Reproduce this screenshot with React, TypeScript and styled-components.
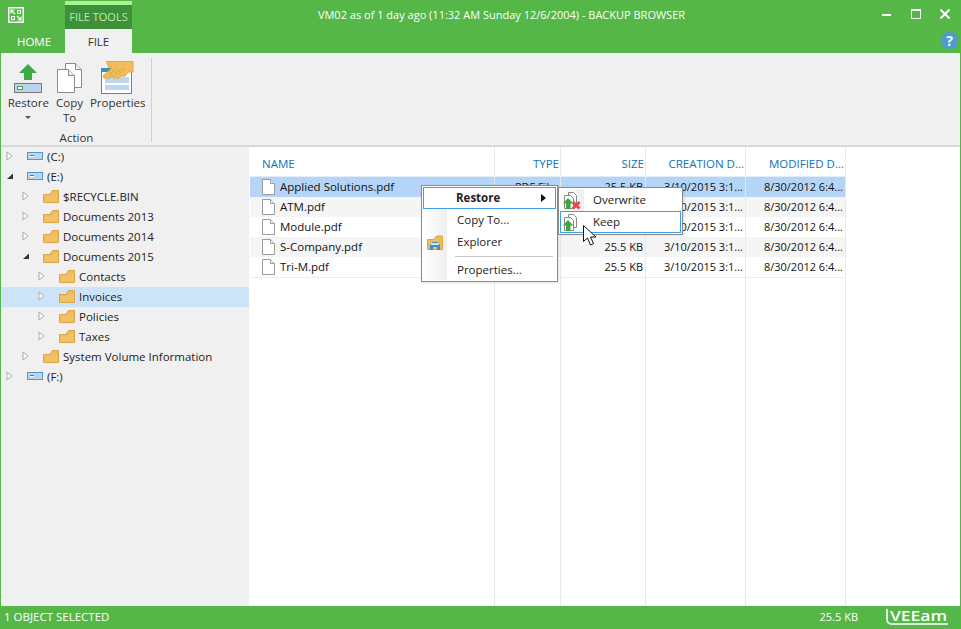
import React from "react";
import styled, { createGlobalStyle } from "styled-components";

const Global = createGlobalStyle`
  html, body { margin: 0; padding: 0; width: 961px; height: 629px; overflow: hidden; }
  body { font-family: "Open Sans", "Noto Sans", "Liberation Sans", sans-serif; font-size: 11.5px; color: #111; }
  * { box-sizing: border-box; }
`;

const GREEN = "#54b748";

const Win = styled.div`
  width: 961px; height: 629px; display: flex; flex-direction: column;
  background: ${GREEN}; padding: 0 1px; position: relative;
`;
const TitleBar = styled.div`
  height: 29px; display: flex; align-items: flex-start; position: relative;
`;
const AppLogo = styled.div`
  width: 16px; height: 16px; margin: 7px 0 0 7px; flex: none;
`;
const Context = styled.div`
  margin: 1px 0 0 41px; width: 67px; height: 28px; background: #3f903a;
  border-top: 4px solid #a8f293; color: #b5efa5; text-align: center; line-height: 24px; flex: none; font-size: 11px;
`;
const Title = styled.div`
  position: absolute; left: 42px; right: 0; top: 6px; text-align: center; color: #fff; line-height: 17px; font-size: 11px;
`;
const WinButtons = styled.div`
  margin-left: auto; display: flex; gap: 19px; padding: 9px 10px 0 0; position: relative;
`;
const TabBar = styled.div`
  height: 24px; display: flex; align-items: stretch; position: relative;
`;
const Tab = styled.div<{ $active?: boolean }>`
  width: ${p => (p.$active ? 67 : 64)}px; text-align: center; line-height: 25px;
  padding-left: ${p => (p.$active ? 0 : 2)}px;
  background: ${p => (p.$active ? "#f0f0f0" : "transparent")};
  color: ${p => (p.$active ? "#333" : "#fff")};
`;
const Help = styled.div`
  position: absolute; right: 2px; top: 3px; width: 17px; height: 17px; border-radius: 50%;
  background: #4c9cd2; color: #fff; font-weight: 700; font-size: 14px; line-height: 17px; text-align: center;
`;
const Ribbon = styled.div`
  height: 94px; background: #f0f0f0; border-bottom: 2px solid #d8d8d8; display: flex; padding-top: 5px;
`;
const Group = styled.div`
  width: 151px; height: 84px; padding-left: 1px; border-right: 1px solid #d0d0d0; display: flex; flex-direction: column;
`;
const GroupItems = styled.div`
  display: flex; height: 73px; flex: none;
`;
const RibbonBtn = styled.div<{ $w: number }>`
  width: ${p => p.$w}px; display: flex; flex-direction: column; align-items: center; text-align: center;
  line-height: 15px; color: #333; padding-top: 3px;
`;
const BtnIcon = styled.div`
  height: 33px; margin-bottom: 1px; display: flex; align-items: flex-end; justify-content: center;
`;
const Caret = styled.div`
  width: 0; height: 0; margin-top: 6px;
  border-left: 3px solid transparent; border-right: 3px solid transparent; border-top: 3px solid #555;
`;
const GroupLabel = styled.div`
  text-align: center; line-height: 14px; color: #333; flex: none;
`;
const Body = styled.div`
  flex: 1; display: flex; min-height: 0; background: #fff;
`;
const Tree = styled.div`
  width: 248px; background: #f0f0f0; flex: none;
`;
const TreeRow = styled.div<{ $level: number; $selected?: boolean }>`
  height: 20px; display: flex; align-items: center; color: #222;
  padding-left: ${p => 5 + p.$level * 16}px; padding-bottom: 2px;
  background: ${p => (p.$selected ? "#cde4f8" : "transparent")};
`;
const Arrow = styled.div`
  width: 11px; display: flex; flex: none;
`;
const TreeIcon = styled.div`
  margin-left: 10px; margin-right: 4px; display: flex; flex: none;
`;
const Pane = styled.div`
  flex: 1; margin-left: 1px; background-color: #fff; display: flex; flex-direction: column;
  background-image:
    linear-gradient(#e9e9e9, #e9e9e9), linear-gradient(#e9e9e9, #e9e9e9), linear-gradient(#e9e9e9, #e9e9e9),
    linear-gradient(#e9e9e9, #e9e9e9), linear-gradient(#e9e9e9, #e9e9e9);
  background-repeat: no-repeat;
  background-size: 1px 100%;
  background-position: 244px 0, 310px 0, 395px 0, 495px 0, 595px 0;
`;
const Cols = "245px 66px 85px 100px 100px";
const Head = styled.div`
  height: 30px; display: grid; grid-template-columns: ${Cols}; width: 596px; flex: none;
  border-bottom: 1px solid #e4eef8; padding-top: 2px;
`;
const HeadCell = styled.div<{ $left?: boolean }>`
  color: #0b72b9; line-height: 29px; white-space: nowrap; overflow: hidden;
  text-align: ${p => (p.$left ? "left" : "right")};
  padding: ${p => (p.$left ? "0 0 0 12px" : "0 2px 0 0")};
`;
const Row = styled.div<{ $bg: string }>`
  height: 20px; display: grid; grid-template-columns: ${Cols}; width: 596px; background: ${p => p.$bg};
`;
const Cell = styled.div`
  text-align: right; padding-right: 2px; line-height: 20px; white-space: nowrap; overflow: hidden; color: #111;
  border-right: 1px solid #e9e9e9; font-size: 11px;
`;
const NameCell = styled(Cell)`
  display: flex; align-items: center; gap: 5px; padding-left: 12px; padding-bottom: 1px; text-align: left; font-size: 11.5px;
`;
const ListEnd = styled.div`
  width: 596px; height: 1px; background: #e6eff8;
`;
const Status = styled.div`
  height: 23px; display: flex; align-items: center; color: #fff; padding: 0 3px 2px; flex: none;
`;
const StatusSize = styled.div`
  margin-left: auto; margin-right: 28px; font-size: 11px;
`;
const VeeamWrap = styled.div`
  margin-right: 9px; display: flex; margin-top: 2px;
`;
const Menu = styled.div`
  position: absolute; background: #fff; border: 1px solid #8a8a8a; padding: 1px;
  box-shadow: 1px 1px 2px rgba(0,0,0,.12);
  &::before {
    content: ""; position: absolute; left: 1px; top: 1px; bottom: 1px; width: 24px;
    background: linear-gradient(90deg, #fff, #efefef);
  }
`;
const MainMenu = styled(Menu)`
  left: 421px; top: 185px; width: 137px; height: 97px;
`;
const SubMenu = styled(Menu)`
  left: 558px; top: 187px; width: 125px; height: 48px;
`;
const MenuItem = styled.div<{ $hot?: boolean; $bold?: boolean }>`
  position: relative; height: 22px; line-height: 20px; display: flex; align-items: center;
  padding-left: ${p => (p.$bold ? 32 : 33)}px; border: 1px solid ${p => (p.$hot ? "#3d9fe8" : "transparent")};
  font-weight: ${p => (p.$bold ? 700 : 400)}; color: #222; background: ${p => (p.$hot ? "#fff" : "transparent")};
`;
const SubArrow = styled.div`
  position: absolute; right: 9px; top: 6px; width: 0; height: 0;
  border-top: 4px solid transparent; border-bottom: 4px solid transparent; border-left: 5px solid #111;
`;
const MenuIcon = styled.div`
  position: absolute; left: 1px; top: 1px; display: flex;
`;
const MenuSep = styled.div`
  height: 1px; background: #c8c8c8; margin: 3px 3px 2px 32px; position: relative;
`;
const ExplorerSlot = styled.div`
  position: absolute; left: 3px; top: 3px; display: flex;
`;
const SubItem = styled(MenuItem)`
  padding-left: 32px;
`;
const CursorWrap = styled.div`
  position: absolute; left: 583px; top: 225px; display: flex;
`;

const Folder = () => (
  <svg width="16" height="14" viewBox="0 0 16 14">
    <path d="M.5 13.5V5.5H7L9.5 1.5H15.5V13.5z" fill="#eebc5a" stroke="#dca644" />
    <path d="M2 12.5V7h6.5l1.5-2.5h4.5v8z" fill="#f0c26a" />
  </svg>
);
const Drive = () => (
  <svg width="16" height="8" viewBox="0 0 16 8">
    <rect x=".5" y=".5" width="15" height="7" fill="#bcd6ee" stroke="#4f97cd" />
    <rect x="3" y="3" width="4" height="2" fill="#fff" />
    <rect x="3" y="3" width="4" height="1" fill="#3d83b8" />
  </svg>
);
const Tri = ({ open }: { open?: boolean }) =>
  open ? (
    <svg width="8" height="8" viewBox="0 0 8 8"><path d="M1 7L7 1.5V7z" fill="#333" /></svg>
  ) : (
    <svg width="7" height="10" viewBox="0 0 7 10"><path d="M1 1l5 4-5 4z" fill="#fff" stroke="#aaa" /></svg>
  );
const FileIcon = () => (
  <svg width="13" height="16" viewBox="0 0 13 16">
    <path d="M.5.5h8l4 4v11H.5z" fill="#fff" stroke="#9a9a9a" />
    <path d="M8.5.5v4h4" fill="#eee" stroke="#9a9a9a" />
  </svg>
);
const PageIcon = () => (
  <svg width="25" height="31" viewBox="0 0 25 31">
    <path d="M8.5.5h10l6 6v18h-16z" fill="#fff" stroke="#8a8a8a" />
    <path d="M18.5.5v6h6" fill="#eee" stroke="#8a8a8a" />
    <path d="M.5 6.5h11l6 6v17H.5z" fill="#fff" stroke="#8a8a8a" />
    <path d="M11.5 6.5v6h6" fill="#eee" stroke="#8a8a8a" />
  </svg>
);
const RestoreIcon = () => (
  <svg width="28" height="30" viewBox="0 0 28 30">
    <path d="M14 0L23 9H18V16H10V9H5z" fill="#3fa945" />
    <rect x=".5" y="19.5" width="27" height="9" fill="#bcd6ee" stroke="#777" />
    <rect x="3.5" y="22.5" width="5" height="3" fill="#fff" stroke="#3fa945" />
  </svg>
);
const PropsIcon = () => (
  <svg width="33" height="33" viewBox="0 0 33 33">
    <rect x=".5" y="7.5" width="30" height="25" fill="#fff" stroke="#3f8fc4" />
    <rect x="1" y="7" width="30" height="4" fill="#3f8fc4" />
    <rect x="4" y="16" width="24" height="6" fill="#bcd6ee" />
    <rect x="4" y="24" width="24" height="5" fill="#bcd6ee" />
    <path d="M5.5.5H32V11H27L24 15H20L18 17H13L11 15L9 17H3L2 15L11 7H8z" fill="#f0bd5e" stroke="#e3a63e" />
    <path d="M8 14l7-6M13 14l7-6M18 13l6-5" stroke="#dba039" />
  </svg>
);
const MenuDocIcon = ({ del }: { del?: boolean }) => (
  <svg width="20" height="20" viewBox="0 0 20 20">
    <path d="M6.5 1.5h5l3 3v10h-8z" fill="#fff" stroke="#888" />
    <path d="M2.5 4.5h6l3 3v10h-9z" fill="#fff" stroke="#888" />
    <path d="M6 7L11.5 12.5H8.5V18H4V12.5H1z" fill="#3fa544" />
    {del && <path d="M11 11l6.5 6.5m0-6.5L11 17.5" stroke="#e8484a" strokeWidth="3" />}
  </svg>
);
const ExplorerIcon = () => (
  <svg width="16" height="15" viewBox="0 0 16 15">
    <path d="M.5 14.5V4.5H7L9.5 1H15.5V14.5z" fill="#eebc5a" stroke="#dca644" />
    <path d="M3 15V10l2-3h6l2 3v5h-3v-3H6v3z" fill="#3f8fc4" />
    <rect x="4" y="8" width="8" height="2" fill="#cfe4f5" />
  </svg>
);
const Cursor = () => (
  <svg width="13" height="21" viewBox="0 0 13 21">
    <path d="M.5.5v16l4-3.5 3 7 3-1.3-3-6.7h5.5z" fill="#fff" stroke="#111" />
  </svg>
);
const LogoMark = () => (
  <svg width="16" height="16" viewBox="0 0 16 16">
    <rect x=".75" y=".75" width="14.5" height="14.5" fill="none" stroke="#fff" strokeWidth="1.5" />
    <path d="M3 3l4 4M3 6.5V3h3.5M13 13l-4-4M13 9.5V13H9.5" stroke="#fff" strokeWidth="1.2" fill="none" />
    <rect x="9.5" y="3.5" width="3" height="3" fill="none" stroke="#fff" />
    <rect x="3.5" y="9.5" width="3" height="3" fill="none" stroke="#fff" />
  </svg>
);
const VeeamLogo = () => (
  <svg width="62" height="17" viewBox="0 0 62 17">
    <path d="M1 0v10q0 5 5 5h56" fill="none" stroke="#fff" strokeWidth="1.6" />
    <text x="4" y="12" fontFamily="Open Sans" fontWeight="600" fontSize="14" fill="#fff" textLength="57" lengthAdjust="spacingAndGlyphs">VEEam</text>
  </svg>
);
const WinMin = () => <svg width="10" height="10" viewBox="0 0 10 10"><rect y="5" width="9" height="2" fill="#fff" /></svg>;
const WinMax = () => <svg width="10" height="10" viewBox="0 0 10 10"><path d="M.5.5h9v9h-9z" fill="none" stroke="#fff" /><rect width="10" height="2" fill="#fff" /></svg>;
const WinClose = () => <svg width="10" height="10" viewBox="0 0 10 10"><path d="M.5.5l9 9m0-9l-9 9" stroke="#fff" strokeWidth="2" /></svg>;

type Node = { label: string; level: number; kind: "drive" | "folder"; open?: boolean; selected?: boolean };
const nodes: Node[] = [
  { label: "(C:)", level: 0, kind: "drive" },
  { label: "(E:)", level: 0, kind: "drive", open: true },
  { label: "$RECYCLE.BIN", level: 1, kind: "folder" },
  { label: "Documents 2013", level: 1, kind: "folder" },
  { label: "Documents 2014", level: 1, kind: "folder" },
  { label: "Documents 2015", level: 1, kind: "folder", open: true },
  { label: "Contacts", level: 2, kind: "folder" },
  { label: "Invoices", level: 2, kind: "folder", selected: true },
  { label: "Policies", level: 2, kind: "folder" },
  { label: "Taxes", level: 2, kind: "folder" },
  { label: "System Volume Information", level: 1, kind: "folder" },
  { label: "(F:)", level: 0, kind: "drive" },
];
const files = ["Applied Solutions.pdf", "ATM.pdf", "Module.pdf", "S-Company.pdf", "Tri-M.pdf"];

export default function App() {
  return (
    <Win>
      <Global />
      <TitleBar>
        <AppLogo><LogoMark /></AppLogo>
        <Context>FILE TOOLS</Context>
        <Title>VM02 as of 1 day ago (11:32 AM Sunday 12/6/2004) - BACKUP BROWSER</Title>
        <WinButtons><WinMin /><WinMax /><WinClose /></WinButtons>
      </TitleBar>
      <TabBar>
        <Tab>HOME</Tab>
        <Tab $active>FILE</Tab>
        <Help>?</Help>
      </TabBar>
      <Ribbon>
        <Group>
          <GroupItems>
            <RibbonBtn $w={53}><BtnIcon><RestoreIcon /></BtnIcon>Restore<Caret /></RibbonBtn>
            <RibbonBtn $w={30}><BtnIcon><PageIcon /></BtnIcon>Copy<br />To</RibbonBtn>
            <RibbonBtn $w={67}><BtnIcon><PropsIcon /></BtnIcon>Properties</RibbonBtn>
          </GroupItems>
          <GroupLabel>Action</GroupLabel>
        </Group>
      </Ribbon>
      <Body>
        <Tree>
          {nodes.map(n => (
            <TreeRow key={n.label} $level={n.level} $selected={n.selected}>
              <Arrow><Tri open={n.open} /></Arrow>
              <TreeIcon>{n.kind === "drive" ? <Drive /> : <Folder />}</TreeIcon>
              {n.label}
            </TreeRow>
          ))}
        </Tree>
        <Pane>
          <Head>
            <HeadCell $left>NAME</HeadCell>
            <HeadCell>TYPE</HeadCell>
            <HeadCell>SIZE</HeadCell>
            <HeadCell>CREATION D...</HeadCell>
            <HeadCell>MODIFIED D...</HeadCell>
          </Head>
          {files.map((f, i) => (
            <Row key={f} $bg={i === 0 ? "#b5d5f8" : i % 2 ? "#f5f5f5" : "#fff"}>
              <NameCell><FileIcon />{f}</NameCell>
              <Cell>PDF Fil...</Cell>
              <Cell>25.5 KB</Cell>
              <Cell>3/10/2015 3:1...</Cell>
              <Cell>8/30/2012 6:4...</Cell>
            </Row>
          ))}
          <ListEnd />
        </Pane>
      </Body>
      <Status>
        1 OBJECT SELECTED
        <StatusSize>25.5 KB</StatusSize>
        <VeeamWrap><VeeamLogo /></VeeamWrap>
      </Status>
      <MainMenu>
        <MenuItem $hot $bold>Restore<SubArrow /></MenuItem>
        <MenuItem>Copy To...</MenuItem>
        <MenuItem><ExplorerSlot><ExplorerIcon /></ExplorerSlot>Explorer</MenuItem>
        <MenuSep />
        <MenuItem>Properties...</MenuItem>
      </MainMenu>
      <SubMenu>
        <SubItem><MenuIcon><MenuDocIcon del /></MenuIcon>Overwrite</SubItem>
        <SubItem $hot><MenuIcon><MenuDocIcon /></MenuIcon>Keep</SubItem>
      </SubMenu>
      <CursorWrap><Cursor /></CursorWrap>
    </Win>
  );
}
